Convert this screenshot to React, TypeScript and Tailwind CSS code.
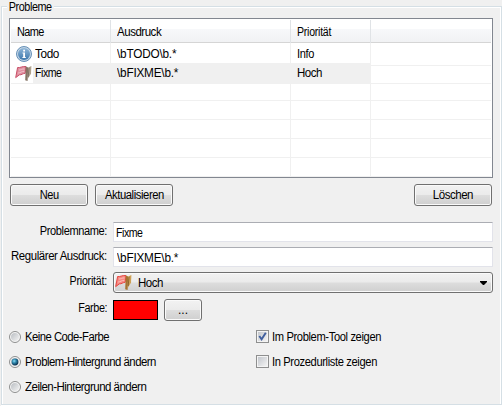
import React from "react";

function InfoIcon() {
  return (
    <svg width="16" height="16" viewBox="0 0 16 16" className="shrink-0">
      <defs>
        <linearGradient id="info" x1="0" y1="0" x2="0" y2="1">
          <stop offset="0" stopColor="#8fb6d8" />
          <stop offset="1" stopColor="#3e78ad" />
        </linearGradient>
      </defs>
      <circle cx="8" cy="8" r="7.5" fill="#c3d5e5" stroke="#5886b0" strokeWidth=".9" />
      <circle cx="8" cy="8" r="6" fill="url(#info)" />
      <rect x="7.2" y="3.7" width="1.8" height="1.8" fill="#fff" />
      <path d="M6.5 6.5H9V11H9.8V12H6.4V11H7.2V7.5H6.5Z" fill="#fff" />
    </svg>
  );
}

function FlagIcon({ vivid = false }: { vivid?: boolean }) {
  return (
    <svg width="17" height="17" viewBox="0 0 17 17" className="shrink-0">
      <path
        d="M2.6 2.5C5 3.2 7 1 11 1.6L10.2 8.3C8 8.3 6.5 10.2 4.5 9.8L.7 12.6Z"
        fill={vivid ? "#f58a84" : "#e0909f"}
        stroke={vivid ? "#e8463f" : "#c94f68"}
      />
      <path d="M4 5C6 5.1 7 3.6 9.5 4M3.2 8C5.5 8 6.8 6 9.3 6.4" fill="none" stroke={vivid ? "#ffc0b8" : "#f1c2cb"} />
      <path d="M10.8 1.5L13.2 2.4L12.6 16L10.2 15.2Z" fill={vivid ? "#a5732f" : "#857363"} />
      <path d="M13.2 2.6L16.4 1L16 8.8L13 13.5Z" fill={vivid ? "#cda054" : "#b0a38e"} />
      <path d="M14 2.8L13.2 12" stroke={vivid ? "#7b5420" : "#6f6358"} strokeWidth=".8" />
    </svg>
  );
}

function T({ children, className }: { children: React.ReactNode; className: string }) {
  return <span className={"inline-block " + className}>{children}</span>;
}

function Button({ children, className }: { children: React.ReactNode; className: string }) {
  return (
    <button
      className={
        "flex h-[22px] items-center justify-center rounded-[3px] border border-[#707070] bg-[linear-gradient(#f2f2f2_0%,#ebebeb_48%,#dddddd_52%,#cfcfcf_100%)] pb-px shadow-[inset_0_0_0_1px_#fafafa] " +
        className
      }
    >
      {children}
    </button>
  );
}

function Radio({ label, checked, fit }: { label: string; checked?: boolean; fit: string }) {
  return (
    <label className="flex h-[25px] items-center">
      <svg width="12" height="12" viewBox="0 0 12 12" className="mr-1 shrink-0">
        <defs>
          <linearGradient id="ring" x1="0" y1="0" x2="1" y2="1">
            <stop offset="0" stopColor="#b9bdc2" />
            <stop offset="1" stopColor="#f4f4f4" />
          </linearGradient>
          <radialGradient id="dot" cx=".38" cy=".35" r=".65">
            <stop offset="0" stopColor="#8fdcf5" />
            <stop offset=".45" stopColor="#2d86ab" />
            <stop offset="1" stopColor="#0c2f4d" />
          </radialGradient>
        </defs>
        <circle cx="6" cy="6" r="5.5" fill="#f7f7f7" stroke="#8e8f8f" />
        <circle cx="6" cy="6" r="4" fill="url(#ring)" />
        {checked && <circle cx="6" cy="6" r="3.4" fill="url(#dot)" />}
      </svg>
      <T className={"origin-left " + fit}>{label}</T>
    </label>
  );
}

function Check({ label, checked, fit }: { label: string; checked?: boolean; fit: string }) {
  return (
    <label className="flex h-[25px] items-center">
      <span className="mr-[3px] flex size-[13px] shrink-0 items-center justify-center border border-[#8e8f8f] bg-[#f4f4f4]">
        <span className="flex size-[9px] items-center justify-center bg-[linear-gradient(135deg,#c3c7cd,#f3f3f3)]">
          {checked && (
            <svg width="9" height="9" viewBox="0 0 9 9">
              <path d="M1.3 4L3.6 7.3L7.8 .7" fill="none" stroke="#405f9e" strokeWidth="1.9" />
            </svg>
          )}
        </span>
      </span>
      <T className={"origin-left " + fit}>{label}</T>
    </label>
  );
}

const rowGrid = "grid grid-cols-[100px_180px_80px_1fr]";
const cell = "border-r border-b border-[#f0f0f0]";

export default function App() {
  return (
    <div className="h-[406px] w-[502px] overflow-hidden bg-[#f0f0f0] pt-[6px] pl-px font-['Liberation_Sans',Arial,sans-serif] text-[12px] leading-[14px] whitespace-nowrap text-black">
      <div className="h-[399px] w-[501px] border border-[#d5dfe5] px-[7px] shadow-[inset_1px_1px_0_#fff,inset_-1px_0_0_#fff,0_1px_0_#fff]">
        <div className="-mt-[7px] h-[18px]">
          <T className="-ml-[2px] origin-left scale-x-[0.9] bg-[#f0f0f0] px-[2px] tracking-[-0.47px]">Probleme</T>
        </div>

        <div className="h-[160px] w-[484px] overflow-hidden border border-[#828790] bg-white p-px">
          <div className="grid h-[23px] grid-cols-[100px_180px_80px_1fr] border-b border-[#d5d5d5] bg-[linear-gradient(#ffffff_0%,#ffffff_42%,#f7f8fa_43%,#f1f2f4_100%)] leading-[24px]">
            <span className="border-r border-[#e0e3e6] pl-[6px]"><T className="origin-left scale-x-[0.91] tracking-[-0.65px]">Name</T></span>
            <span className="border-r border-[#e0e3e6] pl-[6px]"><T className="origin-left scale-x-[0.96] tracking-[-0.5px]">Ausdruck</T></span>
            <span className="border-r border-[#e0e3e6] pl-[6px]"><T className="origin-left scale-x-[0.88] tracking-[-0.28px]">Priorität</T></span>
            <span />
          </div>
          <div className={rowGrid + " h-5"}>
            <span className={cell + " flex items-center gap-[3px] pl-[5px]"}><InfoIcon /><T className="origin-left scale-x-[0.98] tracking-[-0.4px]">Todo</T></span>
            <span className={cell + " pl-[6px] leading-[22px]"}><T className="origin-left scale-x-[0.98] tracking-[-0.2px]">\bTODO\b.*</T></span>
            <span className={cell + " pl-[6px] leading-[22px]"}><T className="origin-left scale-x-[0.92] tracking-[-0.4px]">Info</T></span>
            <span className="border-b border-[#f0f0f0]" />
          </div>
          <div className={rowGrid + " h-[19px]"}>
            <span className={cell + " flex items-center gap-[3px] bg-[linear-gradient(to_right,#ffffff_22px,#f0f0f0_22px)] pl-[4px]"}><FlagIcon /><T className="origin-left scale-x-[0.88] tracking-[-0.5px]">Fixme</T></span>
            <span className={cell + " bg-[#f0f0f0] pl-[6px] leading-[20px]"}><T className="origin-left scale-x-[0.98] tracking-[-0.2px]">\bFIXME\b.*</T></span>
            <span className={cell + " bg-[#f0f0f0] pl-[6px] leading-[20px]"}><T className="origin-left scale-x-[0.96] tracking-[-0.5px]">Hoch</T></span>
            <span className="border-b border-[#f0f0f0]" />
          </div>
          {[0, 1, 2, 3, 4].map((i) => (
            <div key={i} className={rowGrid + " h-[19px]"}>
              <span className={cell} />
              <span className={cell} />
              <span className={cell} />
              <span className="border-b border-[#f0f0f0]" />
            </div>
          ))}
        </div>

        <div className="mt-[6px] flex pr-[2px] pl-px">
          <Button className="w-[78px]"><T className="scale-x-[0.92] tracking-[-0.5px]">Neu</T></Button>
          <Button className="ml-[7px] w-[78px]"><T className="scale-x-[0.94] tracking-[-0.45px]">Aktualisieren</T></Button>
          <Button className="ml-auto w-[78px]"><T className="scale-x-[0.96] tracking-[-0.5px]">Löschen</T></Button>
        </div>

        <div className="mt-4 grid w-[484px] grid-cols-[98px_380px] gap-x-[6px]">
          <span className="flex justify-end pt-[2px]"><T className="origin-right scale-x-[0.92] tracking-[-0.42px]">Problemname:</T></span>
          <div className="h-5 border border-[#e2e3ea] border-t-[#abadb3] bg-white pt-[3px] pl-[2px]"><T className="origin-left scale-x-[0.88] tracking-[-0.5px]">Fixme</T></div>
          <span className="mt-[5px] flex justify-end pt-[2px]"><T className="origin-right scale-x-[0.95] tracking-[-0.42px]">Regulärer Ausdruck:</T></span>
          <div className="mt-[5px] h-5 border border-[#e2e3ea] border-t-[#abadb3] bg-white pt-[3px] pl-[3px]"><T className="origin-left scale-x-[0.98] tracking-[-0.2px]">\bFIXME\b.*</T></div>
          <span className="mt-[5px] flex justify-end pt-[2px]"><T className="origin-right scale-x-[0.89] tracking-[-0.28px]">Priorität:</T></span>
          <div className="mt-[5px] flex h-[21px] items-center rounded-[3px] border border-[#707070] bg-[linear-gradient(#f2f2f2_0%,#ebebeb_48%,#dddddd_52%,#cfcfcf_100%)] pl-px shadow-[inset_0_0_0_1px_#fafafa]">
            <FlagIcon vivid />
            <T className="ml-[6px] origin-left scale-x-[0.96] pt-px tracking-[-0.5px]">Hoch</T>
            <svg width="7" height="4" viewBox="0 0 7 4" className="mr-[5px] ml-auto">
              <path d="M0 0H7V1L4 4H3L0 1Z" fill="#000" />
            </svg>
          </div>
          <span className="mt-[6px] flex justify-end pt-[2px]"><T className="origin-right scale-x-[0.9] tracking-[-0.42px]">Farbe:</T></span>
          <div className="mt-[6px] flex h-[22px] items-start">
            <div className="mt-px h-5 w-[45px] border border-black bg-[#ff0000]" />
            <Button className="ml-[6px] w-[38px]">...</Button>
          </div>
        </div>

        <div className="mt-[3px] flex">
          <div className="w-[247px]">
            <Radio label="Keine Code-Farbe" fit="scale-x-[0.94] tracking-[-0.55px]" />
            <Radio label="Problem-Hintergrund ändern" checked fit="scale-x-[0.95] tracking-[-0.55px]" />
            <Radio label="Zeilen-Hintergrund ändern" fit="scale-x-[0.96] tracking-[-0.55px]" />
          </div>
          <div>
            <Check label="Im Problem-Tool zeigen" checked fit="scale-x-[0.93] tracking-[-0.4px]" />
            <Check label="In Prozedurliste zeigen" fit="scale-x-[0.93] tracking-[-0.4px]" />
          </div>
        </div>
      </div>
    </div>
  );
}
